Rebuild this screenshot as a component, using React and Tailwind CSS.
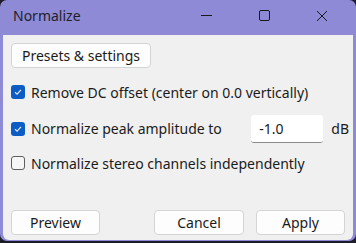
import React from 'react'

function Check({ checked }) {
  return checked ? (
    <span className="w-[14px] h-[14px] rounded-[3px] bg-[#0b5cc4] flex items-center justify-center shrink-0">
      <svg width="10" height="10" viewBox="0 0 10 10">
        <path d="M2 5.2 L4.1 7.2 L8 2.9" fill="none" stroke="#dfe8f6" strokeWidth="1.2" />
      </svg>
    </span>
  ) : (
    <span className="w-[14px] h-[14px] rounded-[3px] border border-[#5e5e5e] bg-[#f6f6f6] shrink-0" />
  )
}

function Btn({ children, className = '' }) {
  return (
    <button className={`h-[25px] rounded-[4px] bg-[#fdfdfd] border border-[#d4d4d4] text-[14px] text-[#1b1b1b] ${className}`}>
      {children}
    </button>
  )
}

export default function App() {
  return (
    <div className="w-[356px] h-[243px] bg-[#1d1c2b] overflow-hidden" style={{ fontFamily: '"Noto Sans", "Open Sans", sans-serif' }}>
      <div className="w-[356px] h-[241px] bg-[#8e8ad6] rounded-t-[7px] rounded-b-[7px] flex flex-col pl-[3px] pr-[3px] pb-[1px]">
        {/* Title bar */}
        <div className="h-[35px] flex items-center shrink-0">
          <span className="ml-[10px] text-[14px] text-[#1e1e2a] leading-none -mt-[4px]">Normalize</span>
          <div className="ml-auto flex items-center -mt-[4px]">
            <div className="w-[58px] flex justify-center">
              <div className="w-[11px] h-[1px] bg-[#1a1a1a]" />
            </div>
            <div className="w-[58px] flex justify-center">
              <div className="w-[11px] h-[11px] border border-[#1a1a1a] rounded-[2px]" />
            </div>
            <div className="w-[58px] flex justify-center mr-[2px]">
              <svg width="12" height="12" viewBox="0 0 12 12">
                <path d="M1 1 L11 11 M11 1 L1 11" stroke="#1a1a1a" strokeWidth="1" />
              </svg>
            </div>
          </div>
        </div>
        {/* Content */}
        <div className="flex-1 bg-[#f0f0f0] rounded-b-[6px] flex flex-col pl-[8px] pr-[4px] text-[14px] text-[#1b1b1b]">
          <Btn className="mt-[8px] w-[140px] self-start">Presets &amp; settings</Btn>
          <div className="mt-[16px] flex items-center gap-[6px] h-[16px]">
            <Check checked />
            <span>Remove DC offset (center on 0.0 vertically)</span>
          </div>
          <div className="mt-[14px] flex items-center h-[29px]">
            <div className="flex items-center gap-[6px]">
              <Check checked />
              <span>Normalize peak amplitude to</span>
            </div>
            <div className="ml-auto w-[72px] h-[28px] bg-white border-b border-[#8a8a8a] rounded-[3px] flex items-center pl-[8px]">
              -1.0
            </div>
            <span className="ml-[8px]">dB</span>
          </div>
          <div className="mt-[12px] flex items-center gap-[6px] h-[16px]">
            <Check />
            <span>Normalize stereo channels independently</span>
          </div>
          <div className="mt-auto mb-[5px] mr-[4px] flex items-center">
            <Btn className="w-[89px]">Preview</Btn>
            <Btn className="ml-auto w-[90px]">Cancel</Btn>
            <Btn className="ml-[12px] w-[89px]">Apply</Btn>
          </div>
        </div>
      </div>
    </div>
  )
}
